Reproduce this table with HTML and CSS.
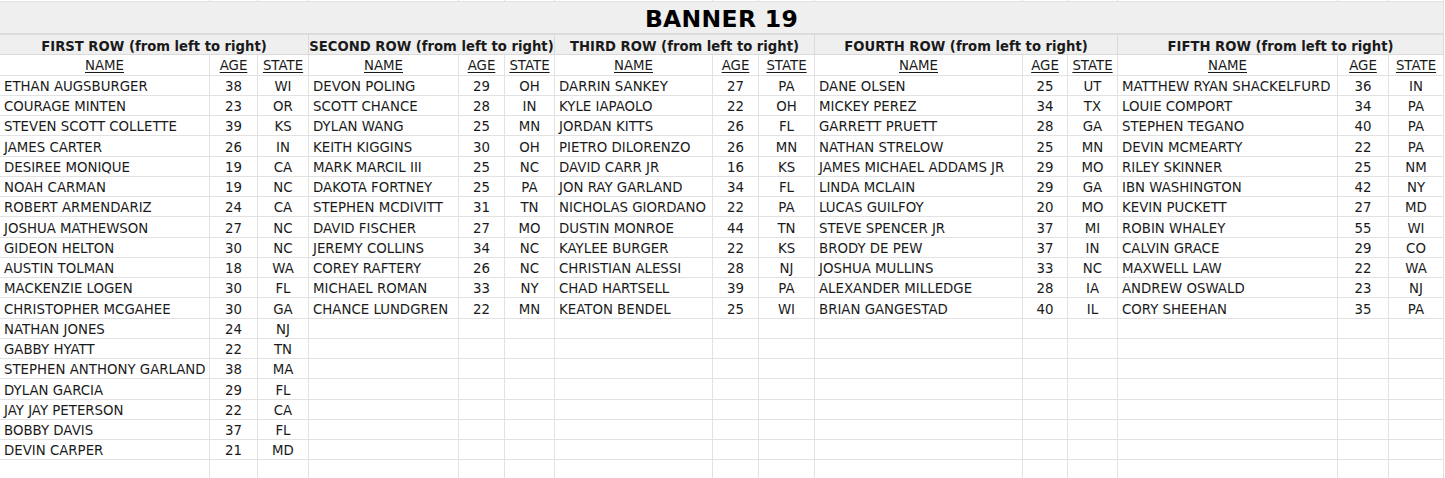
FILE: index.html
```html
<!DOCTYPE html>
<html>
<head>
<meta charset="utf-8">
<link rel="stylesheet" href="styles.css">
</head>
<body>
<div class="sheet">
<div class="c"></div><div class="c"></div><div class="c"></div><div class="c"></div><div class="c"></div><div class="c"></div><div class="c"></div><div class="c"></div><div class="c"></div><div class="c"></div><div class="c"></div><div class="c"></div><div class="c"></div><div class="c"></div><div class="c"></div>
<div class="c title">BANNER 19</div>
<div class="c head">FIRST ROW (from left to right)</div>
<div class="c head">SECOND ROW (from left to right)</div>
<div class="c head">THIRD ROW (from left to right)</div>
<div class="c head">FOURTH ROW (from left to right)</div>
<div class="c head">FIFTH ROW (from left to right)</div>
<div class="c sub"><u>NAME</u></div><div class="c sub"><u>AGE</u></div><div class="c sub"><u>STATE</u></div>
<div class="c sub"><u>NAME</u></div><div class="c sub"><u>AGE</u></div><div class="c sub"><u>STATE</u></div>
<div class="c sub"><u>NAME</u></div><div class="c sub"><u>AGE</u></div><div class="c sub"><u>STATE</u></div>
<div class="c sub"><u>NAME</u></div><div class="c sub"><u>AGE</u></div><div class="c sub"><u>STATE</u></div>
<div class="c sub"><u>NAME</u></div><div class="c sub"><u>AGE</u></div><div class="c sub"><u>STATE</u></div>

<div class="c n">ETHAN AUGSBURGER</div><div class="c v">38</div><div class="c v">WI</div>
<div class="c n">DEVON POLING</div><div class="c v">29</div><div class="c v">OH</div>
<div class="c n">DARRIN SANKEY</div><div class="c v">27</div><div class="c v">PA</div>
<div class="c n">DANE OLSEN</div><div class="c v">25</div><div class="c v">UT</div>
<div class="c n">MATTHEW RYAN SHACKELFURD</div><div class="c v">36</div><div class="c v">IN</div>

<div class="c n">COURAGE MINTEN</div><div class="c v">23</div><div class="c v">OR</div>
<div class="c n">SCOTT CHANCE</div><div class="c v">28</div><div class="c v">IN</div>
<div class="c n">KYLE IAPAOLO</div><div class="c v">22</div><div class="c v">OH</div>
<div class="c n">MICKEY PEREZ</div><div class="c v">34</div><div class="c v">TX</div>
<div class="c n">LOUIE COMPORT</div><div class="c v">34</div><div class="c v">PA</div>

<div class="c n">STEVEN SCOTT COLLETTE</div><div class="c v">39</div><div class="c v">KS</div>
<div class="c n">DYLAN WANG</div><div class="c v">25</div><div class="c v">MN</div>
<div class="c n">JORDAN KITTS</div><div class="c v">26</div><div class="c v">FL</div>
<div class="c n">GARRETT PRUETT</div><div class="c v">28</div><div class="c v">GA</div>
<div class="c n">STEPHEN TEGANO</div><div class="c v">40</div><div class="c v">PA</div>

<div class="c n">JAMES CARTER</div><div class="c v">26</div><div class="c v">IN</div>
<div class="c n">KEITH KIGGINS</div><div class="c v">30</div><div class="c v">OH</div>
<div class="c n">PIETRO DILORENZO</div><div class="c v">26</div><div class="c v">MN</div>
<div class="c n">NATHAN STRELOW</div><div class="c v">25</div><div class="c v">MN</div>
<div class="c n">DEVIN MCMEARTY</div><div class="c v">22</div><div class="c v">PA</div>

<div class="c n">DESIREE MONIQUE</div><div class="c v">19</div><div class="c v">CA</div>
<div class="c n">MARK MARCIL III</div><div class="c v">25</div><div class="c v">NC</div>
<div class="c n">DAVID CARR JR</div><div class="c v">16</div><div class="c v">KS</div>
<div class="c n">JAMES MICHAEL ADDAMS JR</div><div class="c v">29</div><div class="c v">MO</div>
<div class="c n">RILEY SKINNER</div><div class="c v">25</div><div class="c v">NM</div>

<div class="c n">NOAH CARMAN</div><div class="c v">19</div><div class="c v">NC</div>
<div class="c n">DAKOTA FORTNEY</div><div class="c v">25</div><div class="c v">PA</div>
<div class="c n">JON RAY GARLAND</div><div class="c v">34</div><div class="c v">FL</div>
<div class="c n">LINDA MCLAIN</div><div class="c v">29</div><div class="c v">GA</div>
<div class="c n">IBN WASHINGTON</div><div class="c v">42</div><div class="c v">NY</div>

<div class="c n">ROBERT ARMENDARIZ</div><div class="c v">24</div><div class="c v">CA</div>
<div class="c n">STEPHEN MCDIVITT</div><div class="c v">31</div><div class="c v">TN</div>
<div class="c n">NICHOLAS GIORDANO</div><div class="c v">22</div><div class="c v">PA</div>
<div class="c n">LUCAS GUILFOY</div><div class="c v">20</div><div class="c v">MO</div>
<div class="c n">KEVIN PUCKETT</div><div class="c v">27</div><div class="c v">MD</div>

<div class="c n">JOSHUA MATHEWSON</div><div class="c v">27</div><div class="c v">NC</div>
<div class="c n">DAVID FISCHER</div><div class="c v">27</div><div class="c v">MO</div>
<div class="c n">DUSTIN MONROE</div><div class="c v">44</div><div class="c v">TN</div>
<div class="c n">STEVE SPENCER JR</div><div class="c v">37</div><div class="c v">MI</div>
<div class="c n">ROBIN WHALEY</div><div class="c v">55</div><div class="c v">WI</div>

<div class="c n">GIDEON HELTON</div><div class="c v">30</div><div class="c v">NC</div>
<div class="c n">JEREMY COLLINS</div><div class="c v">34</div><div class="c v">NC</div>
<div class="c n">KAYLEE BURGER</div><div class="c v">22</div><div class="c v">KS</div>
<div class="c n">BRODY DE PEW</div><div class="c v">37</div><div class="c v">IN</div>
<div class="c n">CALVIN GRACE</div><div class="c v">29</div><div class="c v">CO</div>

<div class="c n">AUSTIN TOLMAN</div><div class="c v">18</div><div class="c v">WA</div>
<div class="c n">COREY RAFTERY</div><div class="c v">26</div><div class="c v">NC</div>
<div class="c n">CHRISTIAN ALESSI</div><div class="c v">28</div><div class="c v">NJ</div>
<div class="c n">JOSHUA MULLINS</div><div class="c v">33</div><div class="c v">NC</div>
<div class="c n">MAXWELL LAW</div><div class="c v">22</div><div class="c v">WA</div>

<div class="c n">MACKENZIE LOGEN</div><div class="c v">30</div><div class="c v">FL</div>
<div class="c n">MICHAEL ROMAN</div><div class="c v">33</div><div class="c v">NY</div>
<div class="c n">CHAD HARTSELL</div><div class="c v">39</div><div class="c v">PA</div>
<div class="c n">ALEXANDER MILLEDGE</div><div class="c v">28</div><div class="c v">IA</div>
<div class="c n">ANDREW OSWALD</div><div class="c v">23</div><div class="c v">NJ</div>

<div class="c n">CHRISTOPHER MCGAHEE</div><div class="c v">30</div><div class="c v">GA</div>
<div class="c n">CHANCE LUNDGREN</div><div class="c v">22</div><div class="c v">MN</div>
<div class="c n">KEATON BENDEL</div><div class="c v">25</div><div class="c v">WI</div>
<div class="c n">BRIAN GANGESTAD</div><div class="c v">40</div><div class="c v">IL</div>
<div class="c n">CORY SHEEHAN</div><div class="c v">35</div><div class="c v">PA</div>

<div class="c n">NATHAN JONES</div><div class="c v">24</div><div class="c v">NJ</div>
<div class="c"></div><div class="c"></div><div class="c"></div><div class="c"></div><div class="c"></div><div class="c"></div><div class="c"></div><div class="c"></div><div class="c"></div><div class="c"></div><div class="c"></div><div class="c"></div>

<div class="c n">GABBY HYATT</div><div class="c v">22</div><div class="c v">TN</div>
<div class="c"></div><div class="c"></div><div class="c"></div><div class="c"></div><div class="c"></div><div class="c"></div><div class="c"></div><div class="c"></div><div class="c"></div><div class="c"></div><div class="c"></div><div class="c"></div>

<div class="c n">STEPHEN ANTHONY GARLAND</div><div class="c v">38</div><div class="c v">MA</div>
<div class="c"></div><div class="c"></div><div class="c"></div><div class="c"></div><div class="c"></div><div class="c"></div><div class="c"></div><div class="c"></div><div class="c"></div><div class="c"></div><div class="c"></div><div class="c"></div>

<div class="c n">DYLAN GARCIA</div><div class="c v">29</div><div class="c v">FL</div>
<div class="c"></div><div class="c"></div><div class="c"></div><div class="c"></div><div class="c"></div><div class="c"></div><div class="c"></div><div class="c"></div><div class="c"></div><div class="c"></div><div class="c"></div><div class="c"></div>

<div class="c n">JAY JAY PETERSON</div><div class="c v">22</div><div class="c v">CA</div>
<div class="c"></div><div class="c"></div><div class="c"></div><div class="c"></div><div class="c"></div><div class="c"></div><div class="c"></div><div class="c"></div><div class="c"></div><div class="c"></div><div class="c"></div><div class="c"></div>

<div class="c n">BOBBY DAVIS</div><div class="c v">37</div><div class="c v">FL</div>
<div class="c"></div><div class="c"></div><div class="c"></div><div class="c"></div><div class="c"></div><div class="c"></div><div class="c"></div><div class="c"></div><div class="c"></div><div class="c"></div><div class="c"></div><div class="c"></div>

<div class="c n">DEVIN CARPER</div><div class="c v">21</div><div class="c v">MD</div>
<div class="c"></div><div class="c"></div><div class="c"></div><div class="c"></div><div class="c"></div><div class="c"></div><div class="c"></div><div class="c"></div><div class="c"></div><div class="c"></div><div class="c"></div><div class="c"></div>

<div class="c"></div><div class="c"></div><div class="c"></div><div class="c"></div><div class="c"></div><div class="c"></div><div class="c"></div><div class="c"></div><div class="c"></div><div class="c"></div><div class="c"></div><div class="c"></div><div class="c"></div><div class="c"></div><div class="c"></div>
</div>
</body>
</html>
```
FILE: styles.css
```css
html, body {
  margin: 0;
  padding: 0;
  background: #ffffff;
  overflow: hidden;
}

.sheet {
  display: grid;
  width: 1445px;
  grid-template-columns: 210px 48px 51px 150px 46px 50px 158px 46px 56px 208px 45px 50px 220px 51px 55px;
  grid-template-rows: 2px 33px 20px 20.7px repeat(19, 20.25px) 20px;
  font-family: "DejaVu Sans", Verdana, sans-serif;
  font-size: 13.33px;
  color: #1a1a1a;
}

.c {
  box-sizing: border-box;
  border-right: 1px solid #e2e2e2;
  border-bottom: 1px solid #e2e2e2;
  display: flex;
  align-items: center;
  white-space: nowrap;
  overflow: hidden;
  min-width: 0;
  min-height: 0;
}

.title {
  grid-column: 1 / -1;
  justify-content: center;
  background: #efefef;
  font-weight: bold;
  font-size: 23.5px;
  color: #000;
  letter-spacing: 0.3px;
  border-bottom: 2px solid #dcdcdc;
  padding-top: 3px;
}

.head {
  grid-column: span 3;
  justify-content: center;
  background: #efefef;
  font-weight: bold;
  font-size: 13.2px;
  border-right-color: #dadada;
  border-bottom-color: #dadada;
  padding-top: 3px;
}

.sub {
  justify-content: center;
  padding-top: 2px;
}

.sub u {
  text-decoration-thickness: 1px;
  text-underline-offset: 2px;
}

.n {
  padding-left: 4px;
  padding-top: 2px;
}

.v {
  justify-content: center;
  padding-top: 2px;
}
```
